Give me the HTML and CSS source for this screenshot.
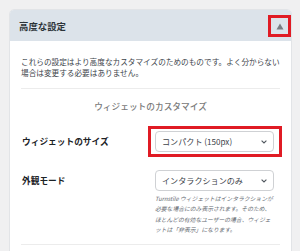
FILE: index.html
```html
<!DOCTYPE html>
<html lang="ja">
<head>
  <meta charset="UTF-8">
  <meta name="viewport" content="width=device-width, initial-scale=1.0">
  <title>高度な設定</title>
  <link rel="stylesheet" href="styles.css">
</head>
<body>
  <div class="card">
    <div class="card-header">
      <h2>高度な設定</h2>
      <button class="toggle" type="button" aria-label="閉じる">
        <svg width="8" height="7" viewBox="0 0 8 7"><polygon points="4,0.5 7.5,6.5 0.5,6.5" fill="#787c82"/></svg>
      </button>
    </div>

    <div class="card-body">
      <p class="intro">これらの設定はより高度なカスタマイズのためのものです。よく分からない場合は変更する必要はありません。</p>

      <div class="section">
        <h3>ウィジェットのカスタマイズ</h3>

        <div class="row">
          <label>ウィジェットのサイズ</label>
          <div class="field marked">
            <div class="select">
              <span>コンパクト (150px)</span>
              <svg width="6" height="4" viewBox="0 0 6 4"><polyline points="0.6,0.6 3,3 5.4,0.6" fill="none" stroke="#50575e" stroke-width="1.1"/></svg>
            </div>
          </div>
        </div>

        <div class="row">
          <label>外観モード</label>
          <div class="field">
            <div class="select">
              <span>インタラクションのみ</span>
              <svg width="6" height="4" viewBox="0 0 6 4"><polyline points="0.6,0.6 3,3 5.4,0.6" fill="none" stroke="#50575e" stroke-width="1.1"/></svg>
            </div>
            <p class="help">Turnstile ウィジェットはインタラクションが必要な場合にのみ表示されます。そのため、ほとんどの有効なユーザーの場合、ウィジェットは「非表示」になります。</p>
          </div>
        </div>
      </div>
    </div>
  </div>
</body>
</html>
```

FILE: styles.css
```css
body {
  margin: 9px 8px 0 9px;
  background-color: #f0f0f1;
  font-family: "Noto Sans CJK JP", "Noto Sans", sans-serif;
  color: #3c434a;
  height: 242px;
  overflow: hidden;
}
.card {
  background-color: #fff;
  border: 1px solid #e2e4e7;
  border-radius: 5px 5px 0 0;
  min-height: 260px;
}
.card-header {
  display: flex;
  align-items: center;
  justify-content: space-between;
  height: 31px;
  padding-left: 9px;
  background-color: #dce3ea;
  border-radius: 4px 4px 0 0;
}
.card-header h2 {
  margin: 0;
  font-size: 9.4px;
  font-weight: bold;
  color: #2c3338;
}
.toggle {
  display: flex;
  align-items: center;
  justify-content: center;
  width: 23px;
  height: 22px;
  padding: 0;
  margin-top: 1px;
  background: none;
  border: 3px solid #e01b24;
}
.card-body {
  padding: 15px 11px 0;
}
.intro {
  margin: 0;
  font-size: 7.65px;
  line-height: 11px;
  color: #3c434a;
}
.section {
  margin-top: 10px;
  border-top: 1px solid #ececec;
  border-bottom: 1px solid #ececec;
  padding-bottom: 9px;
}
.section h3 {
  margin: 12px 0 18px;
  text-align: center;
  font-size: 8.7px;
  line-height: 12px;
  font-weight: 500;
  color: #7a7a7a;
}
.row {
  display: grid;
  grid-template-columns: 134px 119px;
  margin-bottom: 18px;
}
.row:last-child {
  margin-bottom: 0;
}
.row label {
  padding-left: 1px;
  height: 21px;
  display: flex;
  align-items: center;
  font-size: 8.7px;
  font-weight: bold;
  color: #1d2327;
}
.field {
  position: relative;
}
.marked::after {
  content: "";
  position: absolute;
  top: -5px;
  bottom: -5px;
  left: -7px;
  right: -8px;
  border: 3px solid #e01b24;
}
.select {
  display: flex;
  align-items: center;
  justify-content: space-between;
  box-sizing: border-box;
  height: 21px;
  padding: 0 6px 0 6px;
  border: 1px solid #cfd1d4;
  border-radius: 4px;
  background-color: #fff;
  font-size: 8.1px;
  color: #3c434a;
}
.help {
  margin: 3px 0 0;
  font-size: 5.8px;
  line-height: 10.3px;
  font-style: italic;
  color: #646970;
}
```
